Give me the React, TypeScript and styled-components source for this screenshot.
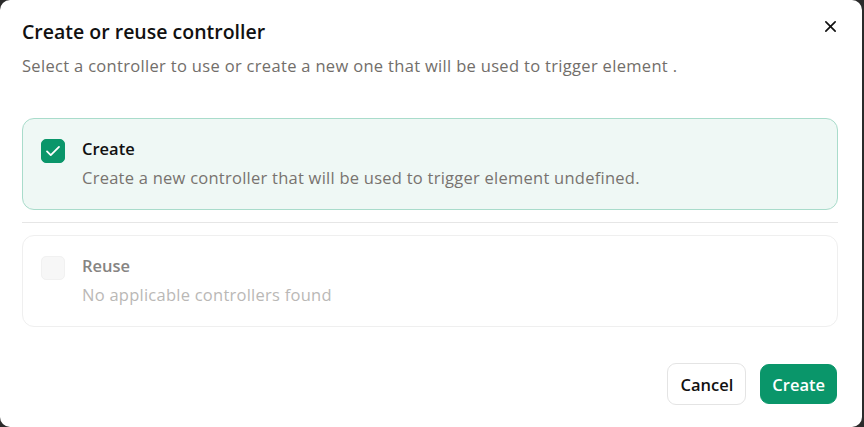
import React, { useState } from 'react';
import styled, { createGlobalStyle } from 'styled-components';

const GlobalStyle = createGlobalStyle`
    html, body {
        margin: 0;
        padding: 0;
        background: #2b2b2b;
        font-family: "Open Sans", "Noto Sans", sans-serif;
        overflow: hidden;
    }
`;

const Dialog = styled.div`
    box-sizing: border-box;
    width: 862px;
    height: 427px;
    background: #ffffff;
    border-radius: 10px;
    padding: 18px 24px 22px 22px;
    display: flex;
    flex-direction: column;
    position: relative;
`;

const Header = styled.div`
    display: flex;
    flex-direction: column;
    gap: 8px;
`;

const Title = styled.h2`
    margin: 0;
    font-size: 19.5px;
    font-weight: 600;
    color: #111111;
    line-height: 28px;
`;

const Subtitle = styled.p`
    margin: 0;
    font-size: 16.5px;
    letter-spacing: 0.32px;
    color: #726e6a;
    line-height: 23px;
`;

const CloseButton = styled.button`
    position: absolute;
    top: 14px;
    right: 20px;
    width: 24px;
    height: 24px;
    padding: 0;
    border: none;
    background: none;
    display: flex;
    align-items: center;
    justify-content: center;
    color: #111;
    cursor: pointer;
`;

const Options = styled.div`
    margin-top: 41px;
    display: flex;
    flex-direction: column;
`;

const Divider = styled.div`
    height: 1px;
    background: #e6e6e6;
    margin: 12px 0;
`;

const OptionCard = styled.label<{ $selected?: boolean; $disabled?: boolean }>`
    box-sizing: border-box;
    height: 92px;
    display: grid;
    grid-template-columns: 24px auto;
    column-gap: 17px;
    padding: 18px 18px;
    border-radius: 12px;
    border: 1px solid ${p => (p.$selected ? '#a9dccb' : '#efefef')};
    background: ${p => (p.$selected ? '#eff8f5' : '#ffffff')};
    cursor: ${p => (p.$disabled ? 'default' : 'pointer')};
`;

const Check = styled.span<{ $checked?: boolean; $disabled?: boolean }>`
    box-sizing: border-box;
    width: 24px;
    height: 24px;
    margin-top: 2px;
    border-radius: 5px;
    display: flex;
    align-items: center;
    justify-content: center;
    background: ${p => (p.$checked ? '#0a966a' : p.$disabled ? '#f7f7f7' : '#fff')};
    border: 1px solid ${p => (p.$checked ? '#0a966a' : '#f1f1f1')};
`;

const OptionText = styled.div`
    display: flex;
    flex-direction: column;
    gap: 6px;
`;

const OptionTitle = styled.div<{ $disabled?: boolean }>`
    font-size: 16.5px;
    font-weight: 600;
    line-height: 23px;
    color: ${p => (p.$disabled ? '#868482' : '#111111')};
`;

const OptionDesc = styled.div<{ $disabled?: boolean }>`
    font-size: 16.5px;
    letter-spacing: 0.25px;
    line-height: 23px;
    color: ${p => (p.$disabled ? '#bab8b6' : '#78736f')};
`;

const Footer = styled.div`
    margin-top: auto;
    display: flex;
    justify-content: flex-end;
    align-items: center;
    gap: 14px;
    padding-right: 1px;
`;

const Button = styled.button<{ $primary?: boolean }>`
    box-sizing: border-box;
    height: ${p => (p.$primary ? '40px' : '42px')};
    padding: 0 ${p => (p.$primary ? '11px' : '12px')};
    border-radius: 9px;
    font-family: inherit;
    font-size: 16.5px;
    font-weight: 600;
    cursor: pointer;
    border: 1px solid ${p => (p.$primary ? '#0a966a' : '#e4e4e4')};
    background: ${p => (p.$primary ? '#0a966a' : '#ffffff')};
    color: ${p => (p.$primary ? '#ffffff' : '#111111')};
`;

const CheckIcon = () => (
    <svg width="18" height="18" viewBox="0 0 24 24" fill="none" stroke="#fff" strokeWidth="2.4" strokeLinecap="round" strokeLinejoin="round">
        <path d="M4 12.5l5 5L20 6.5" />
    </svg>
);

const CloseIcon = () => (
    <svg width="13" height="13" viewBox="0 0 14 14" fill="none" stroke="currentColor" strokeWidth="1.8" strokeLinecap="round">
        <path d="M2 2l10 10M12 2L2 12" />
    </svg>
);

const App = () => {
    const [selected] = useState('create');
    return (
        <>
            <GlobalStyle />
            <Dialog>
                <CloseButton aria-label="Close"><CloseIcon /></CloseButton>
                <Header>
                    <Title>Create or reuse controller</Title>
                    <Subtitle>Select a controller to use or create a new one that will be used to trigger element .</Subtitle>
                </Header>
                <Options>
                    <OptionCard $selected={selected === 'create'}>
                        <Check $checked={selected === 'create'}>{selected === 'create' && <CheckIcon />}</Check>
                        <OptionText>
                            <OptionTitle>Create</OptionTitle>
                            <OptionDesc>Create a new controller that will be used to trigger element undefined.</OptionDesc>
                        </OptionText>
                    </OptionCard>
                    <Divider />
                    <OptionCard $disabled>
                        <Check $disabled />
                        <OptionText>
                            <OptionTitle $disabled>Reuse</OptionTitle>
                            <OptionDesc $disabled>No applicable controllers found</OptionDesc>
                        </OptionText>
                    </OptionCard>
                </Options>
                <Footer>
                    <Button>Cancel</Button>
                    <Button $primary>Create</Button>
                </Footer>
            </Dialog>
        </>
    );
};

export default App;
